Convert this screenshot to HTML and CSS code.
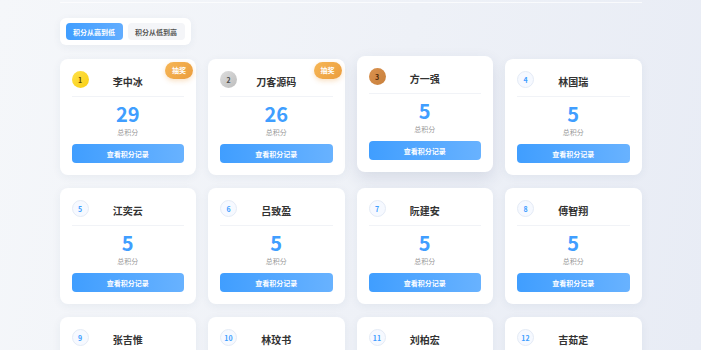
FILE: index.html
```html
<!DOCTYPE html>
<html>
<head>
    <title>积分排行</title>
    <link rel="stylesheet" href="styles.css">
</head>
<body>
    <div class="page">
        <div class="top-line"></div>
        <div class="sort-bar">
            <button class="sort-btn active">积分从高到低</button>
            <button class="sort-btn">积分从低到高</button>
        </div>

        <div class="cards">
            <div class="card">
                <span class="lottery">抽奖</span>
                <div class="card-head">
                    <span class="rank gold">1</span>
                    <span class="name">李中冰</span>
                </div>
                <div class="score">29</div>
                <div class="score-label">总积分</div>
                <button class="record-btn">查看积分记录</button>
            </div>
            <div class="card">
                <span class="lottery">抽奖</span>
                <div class="card-head">
                    <span class="rank silver">2</span>
                    <span class="name">刀客源码</span>
                </div>
                <div class="score">26</div>
                <div class="score-label">总积分</div>
                <button class="record-btn">查看积分记录</button>
            </div>
            <div class="card raised">
                <div class="card-head">
                    <span class="rank bronze">3</span>
                    <span class="name">方一强</span>
                </div>
                <div class="score">5</div>
                <div class="score-label">总积分</div>
                <button class="record-btn">查看积分记录</button>
            </div>
            <div class="card">
                <div class="card-head">
                    <span class="rank">4</span>
                    <span class="name">林国瑞</span>
                </div>
                <div class="score">5</div>
                <div class="score-label">总积分</div>
                <button class="record-btn">查看积分记录</button>
            </div>
            <div class="card">
                <div class="card-head">
                    <span class="rank">5</span>
                    <span class="name">江奕云</span>
                </div>
                <div class="score">5</div>
                <div class="score-label">总积分</div>
                <button class="record-btn">查看积分记录</button>
            </div>
            <div class="card">
                <div class="card-head">
                    <span class="rank">6</span>
                    <span class="name">吕致盈</span>
                </div>
                <div class="score">5</div>
                <div class="score-label">总积分</div>
                <button class="record-btn">查看积分记录</button>
            </div>
            <div class="card">
                <div class="card-head">
                    <span class="rank">7</span>
                    <span class="name">阮建安</span>
                </div>
                <div class="score">5</div>
                <div class="score-label">总积分</div>
                <button class="record-btn">查看积分记录</button>
            </div>
            <div class="card">
                <div class="card-head">
                    <span class="rank">8</span>
                    <span class="name">傅智翔</span>
                </div>
                <div class="score">5</div>
                <div class="score-label">总积分</div>
                <button class="record-btn">查看积分记录</button>
            </div>
            <div class="card">
                <div class="card-head">
                    <span class="rank">9</span>
                    <span class="name">张吉惟</span>
                </div>
                <div class="score">5</div>
                <div class="score-label">总积分</div>
                <button class="record-btn">查看积分记录</button>
            </div>
            <div class="card">
                <div class="card-head">
                    <span class="rank">10</span>
                    <span class="name">林玟书</span>
                </div>
                <div class="score">5</div>
                <div class="score-label">总积分</div>
                <button class="record-btn">查看积分记录</button>
            </div>
            <div class="card">
                <div class="card-head">
                    <span class="rank">11</span>
                    <span class="name">刘柏宏</span>
                </div>
                <div class="score">5</div>
                <div class="score-label">总积分</div>
                <button class="record-btn">查看积分记录</button>
            </div>
            <div class="card">
                <div class="card-head">
                    <span class="rank">12</span>
                    <span class="name">吉茹定</span>
                </div>
                <div class="score">5</div>
                <div class="score-label">总积分</div>
                <button class="record-btn">查看积分记录</button>
            </div>
        </div>
    </div>
</body>
</html>
```

FILE: styles.css
```css
html, body {
    margin: 0;
    height: 100%;
}
body {
    font-family: "Noto Sans CJK SC", "Noto Sans", sans-serif;
    background: linear-gradient(100deg, #f5f7fa 0%, #eef1f7 55%, #e8ecf5 100%);
    color: #333;
    overflow: hidden;
}
.page {
    width: 582px;
    margin: 0 auto;
}
.top-line {
    height: 2px;
    border-bottom: 1px solid rgba(255, 255, 255, 0.7);
}
.sort-bar {
    display: inline-flex;
    gap: 5px;
    margin-top: 15px;
    padding: 5px 6px;
    background: #fff;
    border-radius: 6px;
    box-shadow: 0 2px 8px rgba(40, 60, 110, 0.06);
}
.sort-btn {
    width: 57px;
    height: 17px;
    padding: 0;
    border: none;
    border-radius: 4px;
    background: #f4f5f8;
    color: #555;
    font-family: inherit;
    font-size: 7px;
    font-weight: bold;
    cursor: pointer;
}
.sort-btn.active {
    background: linear-gradient(90deg, #409eff, #62adff);
    color: #fff;
}
.cards {
    display: grid;
    grid-template-columns: repeat(4, 1fr);
    column-gap: 12px;
    row-gap: 13px;
    margin-top: 14px;
}
.card {
    position: relative;
    display: flex;
    flex-direction: column;
    padding: 11px 12px 12px;
    background: #fff;
    border-radius: 8px;
    box-shadow: 0 2px 10px rgba(40, 60, 110, 0.06);
}
.card.raised {
    transform: translateY(-3px);
    box-shadow: 0 6px 16px rgba(40, 60, 110, 0.12);
}
.lottery {
    position: absolute;
    top: 3px;
    right: 3px;
    width: 28px;
    height: 17px;
    line-height: 17px;
    text-align: center;
    border-radius: 9px;
    background: linear-gradient(135deg, #f6b655, #eb9d3e);
    color: #fff;
    font-size: 7px;
    font-weight: bold;
    box-shadow: 0 2px 5px rgba(235, 157, 62, 0.3);
}
.card-head {
    display: grid;
    grid-template-columns: 17px 1fr 17px;
    align-items: center;
    padding-bottom: 7px;
    border-bottom: 1px solid #f1f3f7;
}
.rank {
    width: 17px;
    height: 17px;
    box-sizing: border-box;
    border-radius: 50%;
    display: flex;
    align-items: center;
    justify-content: center;
    font-size: 7px;
    font-weight: bold;
    color: #409eff;
    background: #f6f9ff;
    border: 1px solid #e4ebf6;
}
.rank.gold {
    background: linear-gradient(135deg, #ffe14a, #f9cf12);
    border: none;
    color: #5a4600;
}
.rank.silver {
    background: linear-gradient(135deg, #dedede, #bdbdbd);
    border: none;
    color: #4a4a4a;
}
.rank.bronze {
    background: linear-gradient(135deg, #d9924f, #c9803c);
    border: none;
    color: #4d2a0c;
}
.name {
    grid-column: 2;
    margin-top: 4px;
    text-align: center;
    font-size: 10px;
    font-weight: bold;
    color: #333;
}
.score {
    margin-top: 7px;
    text-align: center;
    font-size: 20px;
    line-height: 20px;
    font-weight: bold;
    color: #409eff;
}
.score-label {
    margin-top: 3px;
    text-align: center;
    font-size: 7px;
    line-height: 10px;
    color: #9a9a9a;
}
.record-btn {
    margin-top: 7px;
    height: 19px;
    padding: 0;
    border: none;
    border-radius: 4px;
    background: linear-gradient(90deg, #409eff, #68b2ff);
    color: #fff;
    font-family: inherit;
    font-size: 7px;
    font-weight: bold;
    cursor: pointer;
}
```
